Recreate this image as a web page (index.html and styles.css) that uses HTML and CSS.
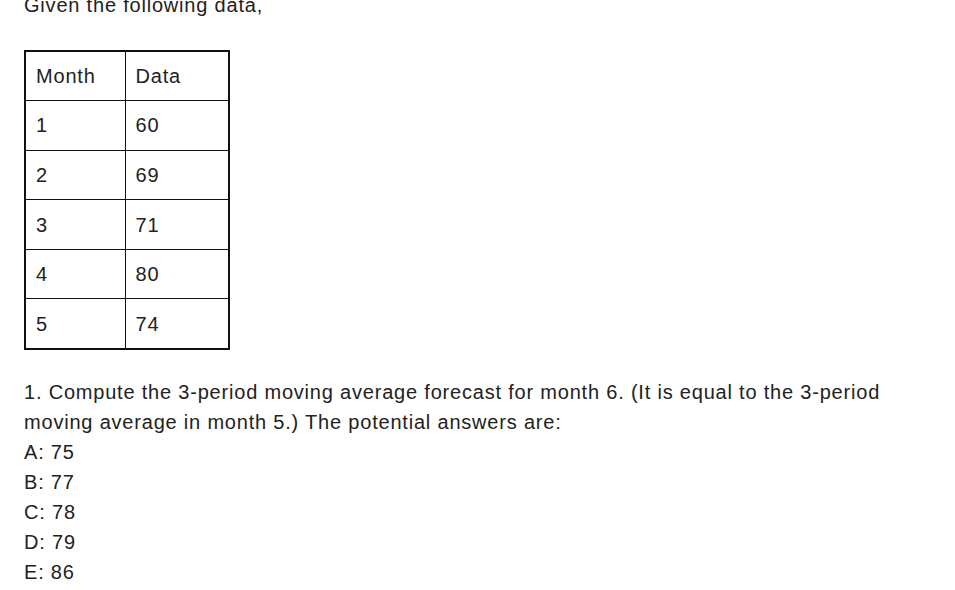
FILE: index.html
```html
<!DOCTYPE html>
<html>
<head>
<meta charset="utf-8">
<link rel="stylesheet" href="styles.css">
</head>
<body>
<div class="page">
  <p class="intro">Given the following data,</p>
  <table class="data">
    <tr><td class="c1">Month</td><td class="c2">Data</td></tr>
    <tr><td class="c1">1</td><td class="c2">60</td></tr>
    <tr><td class="c1">2</td><td class="c2">69</td></tr>
    <tr><td class="c1">3</td><td class="c2">71</td></tr>
    <tr><td class="c1">4</td><td class="c2">80</td></tr>
    <tr><td class="c1">5</td><td class="c2">74</td></tr>
  </table>
  <div class="question">
    <p class="q">1. Compute the 3-period moving average forecast for month 6. (It is equal to the 3-period moving average in month 5.) The potential answers are:</p>
    <p class="opt">A: 75</p>
    <p class="opt">B: 77</p>
    <p class="opt">C: 78</p>
    <p class="opt">D: 79</p>
    <p class="opt">E: 86</p>
  </div>
</div>
</body>
</html>
```
FILE: styles.css
```css
html, body {
  margin: 0;
  padding: 0;
  background: #ffffff;
}
.page {
  padding: 0 24px;
  margin-top: -10px;
  font-family: "Liberation Sans", Arial, sans-serif;
  font-size: 20px;
  letter-spacing: 0.8px;
  line-height: 30px;
  color: #222222;
}
.intro {
  margin: 0 0 30px 0;
}
.data {
  border-collapse: collapse;
  border: 2px solid #111;
}
.data td {
  border: 1.5px solid #111;
  height: 49.6px;
  box-sizing: border-box;
  padding: 0 10px;
  vertical-align: middle;
}
.c1 { width: 100px; }
.c2 { width: 104px; }
.question {
  margin-top: 27px;
  width: 900px;
}
.question p {
  margin: 0;
}
```
